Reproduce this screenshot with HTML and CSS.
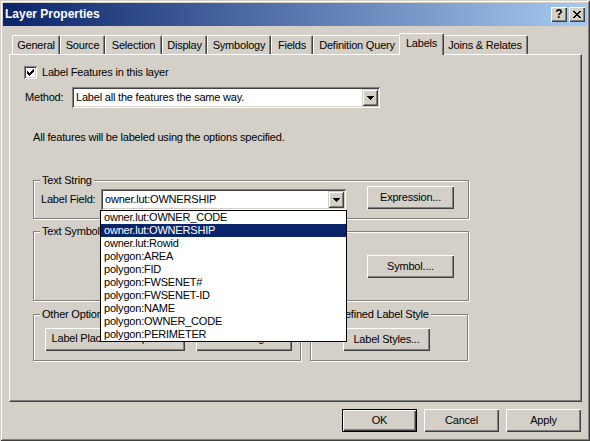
FILE: index.html
```html
<!DOCTYPE html>
<html>
<head>
<meta charset="utf-8">
<title>Layer Properties</title>
<link rel="stylesheet" href="styles.css">
</head>
<body>
<div class="window">
  <div class="titlebar">
    <span class="title">Layer Properties</span>
    <div class="caption-buttons">
      <span class="cap-btn help">?</span>
      <span class="cap-btn close">
        <svg width="8" height="7" viewBox="0 0 8 7" shape-rendering="crispEdges"><path d="M0 0h2v1h-2z M6 0h2v1h-2z M1 1h2v1h-2z M5 1h2v1h-2z M2 2h4v1h-4z M3 3h2v1h-2z M2 4h4v1h-4z M1 5h2v1h-2z M5 5h2v1h-2z M0 6h2v1h-2z M6 6h2v1h-2z" fill="#000"/></svg>
      </span>
    </div>
  </div>
  <div class="body">
    <div class="tabs">
      <div class="tab">General</div>
      <div class="tab">Source</div>
      <div class="tab">Selection</div>
      <div class="tab">Display</div>
      <div class="tab">Symbology</div>
      <div class="tab">Fields</div>
      <div class="tab">Definition Query</div>
      <div class="tab active">Labels</div>
      <div class="tab">Joins &amp; Relates</div>
    </div>
    <div class="panel">
      <div class="check-row">
        <span class="checkbox">
          <svg width="7" height="7" viewBox="0 0 7 7" shape-rendering="crispEdges"><path d="M0 2h1v3h-1z M1 3h1v3h-1z M2 4h1v3h-1z M3 3h1v3h-1z M4 2h1v3h-1z M5 1h1v3h-1z M6 0h1v3h-1z" fill="#000"/></svg>
        </span>
        <span>Label Features in this layer</span>
      </div>
      <div class="method-row">
        <span class="method-label">Method:</span>
        <div class="combo method-combo">
          <span class="combo-text">Label all the features the same way.</span>
          <span class="combo-btn"><svg width="7" height="4" viewBox="0 0 7 4" shape-rendering="crispEdges"><path d="M0 0h7v1h-7z M1 1h5v1h-5z M2 2h3v1h-3z M3 3h1v1h-1z" fill="#000"/></svg></span>
        </div>
      </div>
      <p class="info">All features will be labeled using the options specified.</p>

      <div class="group group-string">
        <div class="legend">Text String</div>
        <div class="string-row">
          <span class="field-label">Label Field:</span>
          <div class="combo field-combo">
            <span class="combo-text">owner.lut:OWNERSHIP</span>
            <span class="combo-btn"><svg width="7" height="4" viewBox="0 0 7 4" shape-rendering="crispEdges"><path d="M0 0h7v1h-7z M1 1h5v1h-5z M2 2h3v1h-3z M3 3h1v1h-1z" fill="#000"/></svg></span>
            <ul class="dropdown">
              <li>owner.lut:OWNER_CODE</li>
              <li class="selected">owner.lut:OWNERSHIP</li>
              <li>owner.lut:Rowid</li>
              <li>polygon:AREA</li>
              <li>polygon:FID</li>
              <li>polygon:FWSENET#</li>
              <li>polygon:FWSENET-ID</li>
              <li>polygon:NAME</li>
              <li>polygon:OWNER_CODE</li>
              <li>polygon:PERIMETER</li>
            </ul>
          </div>
          <span class="btn btn-expr">Expression...</span>
        </div>
      </div>

      <div class="group group-symbol">
        <div class="legend">Text Symbol</div>
        <div class="symbol-row">
          <span class="btn btn-symbol">Symbol....</span>
        </div>
      </div>

      <div class="groups-row">
        <div class="group group-other">
          <div class="legend">Other Options</div>
          <div class="btn-row">
            <span class="btn btn-place">Label Placement Options...</span>
            <span class="btn btn-scale">Scale Range...</span>
          </div>
        </div>
        <div class="group group-style">
          <div class="legend">Pre-defined Label Style</div>
          <div class="btn-row">
            <span class="btn btn-styles">Label Styles...</span>
          </div>
        </div>
      </div>
    </div>
    <div class="footer">
      <span class="btn btn-foot default">OK</span>
      <span class="btn btn-foot">Cancel</span>
      <span class="btn btn-foot">Apply</span>
    </div>
  </div>
</div>
</body>
</html>
```

FILE: styles.css
```css
* {
  box-sizing: border-box;
}

body {
  margin: 0;
  background: #d4d0c8;
  font-family: "Liberation Sans", Arial, sans-serif;
  font-size: 11px;
  line-height: 13px;
  letter-spacing: -0.2px;
  color: #000;
}

.window {
  width: 590px;
  height: 441px;
  padding: 3px;
  background: #d4d0c8;
  box-shadow: inset 1px 1px 0 #d4d0c8, inset -1px -1px 0 #404040,
    inset 2px 2px 0 #fff, inset -2px -2px 0 #808080;
  overflow: hidden;
}

/* Title bar */
.titlebar {
  height: 23px;
  display: flex;
  align-items: center;
  justify-content: space-between;
  padding: 0 2px;
  background: linear-gradient(to right, #0a246a, #a6caf0);
}

.title {
  color: #fff;
  font-weight: bold;
  font-size: 12px;
  letter-spacing: 0;
}

.caption-buttons {
  display: flex;
  gap: 2px;
}

.cap-btn {
  width: 16px;
  height: 15px;
  display: flex;
  align-items: center;
  justify-content: center;
  background: #d4d0c8;
  box-shadow: inset 1px 1px 0 #fff, inset -1px -1px 0 #404040,
    inset -2px -2px 0 #808080;
}

.cap-btn svg {
  display: block;
}

.help {
  font-weight: bold;
  font-size: 12px;
  letter-spacing: 0;
  padding-bottom: 1px;
}

.close {
  padding: 0 1px 1px 0;
}

/* Body */
.body {
  padding: 7px 5px 0 6px;
}

.tabs {
  display: flex;
  align-items: flex-end;
  height: 21px;
  padding-left: 3px;
}

.tab {
  height: 19px;
  padding-top: 3px;
  text-align: center;
  white-space: nowrap;
  background: #d4d0c8;
  border-top: 1px solid #fff;
  border-left: 1px solid #fff;
  border-right: 1px solid #404040;
  border-radius: 2px 2px 0 0;
  box-shadow: inset -1px 0 0 #808080;
}

.tab:nth-child(1) { width: 48px; }
.tab:nth-child(2) { width: 45px; }
.tab:nth-child(3) { width: 57px; }
.tab:nth-child(4) { width: 45px; }
.tab:nth-child(5) { width: 64px; }
.tab:nth-child(6) { width: 42px; }
.tab:nth-child(7) { width: 88px; }
.tab:nth-child(8) { width: 45px; }
.tab:nth-child(9) { width: 86px; }

.tab.active {
  height: 22px;
  margin: 0 -2px -1px;
  position: relative;
  z-index: 1;
}

.panel {
  height: 348px;
  padding: 11px 0 0 14px;
  background: #d4d0c8;
  border-top: 1px solid #fff;
  border-left: 1px solid #fff;
  border-right: 1px solid #404040;
  border-bottom: 1px solid #404040;
  box-shadow: inset -1px -1px 0 #808080;
}

/* Checkbox row */
.check-row {
  display: flex;
  align-items: center;
  gap: 5px;
  height: 13px;
}

.checkbox {
  width: 13px;
  height: 13px;
  padding: 3px;
  background: #fff;
  box-shadow: inset 1px 1px 0 #808080, inset -1px -1px 0 #fff,
    inset 2px 2px 0 #404040, inset -2px -2px 0 #d4d0c8;
}

.checkbox svg {
  display: block;
}

/* Method row */
.method-row {
  display: flex;
  align-items: center;
  margin-top: 8px;
  height: 21px;
}

.method-label {
  width: 47px;
  margin-left: 1px;
}

.combo {
  position: relative;
  height: 21px;
  display: flex;
  align-items: center;
  justify-content: space-between;
  padding: 2px 2px 2px 4px;
  background: #fff;
  box-shadow: inset 1px 1px 0 #808080, inset -1px -1px 0 #fff,
    inset 2px 2px 0 #404040, inset -2px -2px 0 #d4d0c8;
}

.method-combo {
  width: 308px;
}

.combo-text {
  white-space: nowrap;
}

.combo-btn {
  width: 16px;
  height: 17px;
  display: flex;
  align-items: center;
  justify-content: center;
  background: #d4d0c8;
  box-shadow: inset 1px 1px 0 #d4d0c8, inset -1px -1px 0 #404040,
    inset 2px 2px 0 #fff, inset -2px -2px 0 #808080;
}

.combo-btn svg {
  display: block;
}

.info {
  margin: 23px 0 0 9px;
}

/* Group boxes */
.group {
  border: 1px solid #808080;
  box-shadow: 1px 1px 0 #fff, inset 1px 1px 0 #fff;
  margin-left: 9px;
}

.legend {
  width: fit-content;
  height: 13px;
  margin: -7px 0 0 6px;
  padding: 0 2px;
  background: #d4d0c8;
  white-space: nowrap;
}

.group-string {
  width: 436px;
  margin-top: 36px;
  padding-bottom: 8px;
}

.string-row {
  display: flex;
  align-items: flex-start;
  margin-top: -1px;
  padding-left: 7px;
}

.field-label {
  width: 60px;
  margin-top: 7px;
}

.field-combo {
  width: 245px;
  margin-top: 3px;
}

.dropdown {
  position: absolute;
  z-index: 10;
  top: 100%;
  left: -1px;
  width: 247px;
  margin: 0;
  padding: 0;
  list-style: none;
  background: #fff;
  border: 1px solid #000;
}

.dropdown li {
  height: 13px;
  line-height: 13px;
  padding-left: 3px;
  white-space: nowrap;
}

.dropdown li.selected {
  background: #0a246a;
  color: #fff;
}

/* Buttons */
.btn {
  display: flex;
  align-items: center;
  justify-content: center;
  height: 23px;
  padding-bottom: 1px;
  white-space: nowrap;
  background: #d4d0c8;
  box-shadow: inset 1px 1px 0 #fff, inset -1px -1px 0 #404040,
    inset -2px -2px 0 #808080;
}

.btn-expr {
  width: 87px;
  margin-left: 21px;
}

.group-symbol {
  width: 436px;
  height: 70px;
  margin-top: 12px;
}

.symbol-row {
  display: flex;
  margin-top: 17px;
}

.btn-symbol {
  width: 87px;
  margin-left: 333px;
}

.groups-row {
  display: flex;
  gap: 9px;
  margin: 13px 0 0 9px;
}

.groups-row .group {
  margin-left: 0;
  height: 47px;
}

.group-other {
  width: 268px;
}

.group-style {
  width: 158px;
}

.btn-row {
  display: flex;
  margin-top: 7px;
}

.btn-place {
  width: 140px;
  margin-left: 11px;
  padding-bottom: 3px;
}

.btn-scale {
  width: 96px;
  margin-left: 11px;
  padding-bottom: 3px;
}

.btn-styles {
  width: 87px;
  margin-left: 32px;
}

/* Footer */
.footer {
  display: flex;
  justify-content: flex-end;
  gap: 7px;
  margin-top: 7px;
  padding-right: 1px;
}

.btn-foot {
  width: 75px;
}

.btn-foot.default {
  border: 1px solid #000;
}
```
